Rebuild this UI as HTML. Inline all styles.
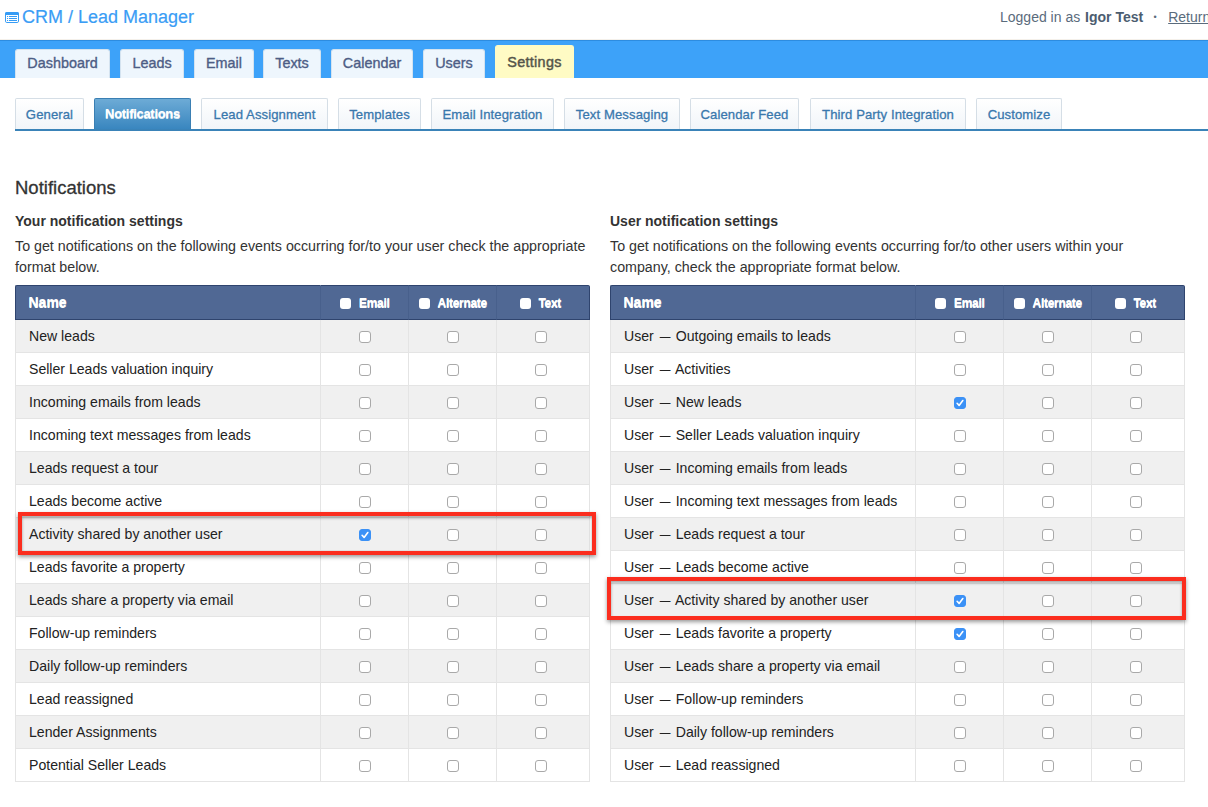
<!DOCTYPE html>
<html lang="en">
<head>
<meta charset="utf-8">
<title>CRM / Lead Manager</title>
<style>
*{box-sizing:border-box;}
html,body{margin:0;padding:0;background:#fff;}
body{width:1208px;height:807px;overflow:hidden;position:relative;font-family:"Liberation Sans",Arial,sans-serif;font-size:14px;color:#222;}
.abs{position:absolute;}
#title{left:22px;top:6px;font-size:18px;color:#3a9df5;-webkit-text-stroke:0.2px #3a9df5;white-space:nowrap;line-height:22px;}
#ticon{left:5px;top:12px;}
#logged{left:1000px;top:8px;font-size:14px;color:#5a6b7c;white-space:nowrap;line-height:18px;}
#logged b{color:#4c5d70;margin-left:1px;}
#logged u{color:#5a6b7c;}
#bar{left:0;top:40px;width:1208px;height:38px;background:#3da2f9;border-top:1px solid #2d8ce0;box-shadow:0 -1px 0 #f4f0ea;}
.mt{position:absolute;top:49px;height:29px;background:#eef6fd;border:1px solid #d4e3f0;border-bottom:none;border-radius:3px 3px 0 0;font-size:14.4px;color:#4d5d85;text-align:center;line-height:27px;white-space:nowrap;-webkit-text-stroke:0.35px #4d5d85;}
.mt.act{top:45px;height:33px;background:#fffbc4;border-color:#fffbc4;color:#55554a;line-height:32px;letter-spacing:0.3px;-webkit-text-stroke:0.45px #55554a;}
.st{position:absolute;top:98px;height:31px;background:linear-gradient(#ffffff,#f1f5f9);border:1px solid #d5dee6;border-bottom:none;border-radius:2px 2px 0 0;font-size:13.1px;color:#3a78ad;text-align:center;line-height:31px;white-space:nowrap;letter-spacing:0.1px;-webkit-text-stroke:0.3px #3a78ad;}
.st.act{background:linear-gradient(#6dabd6,#3986bf);border-color:#3a7fb3;color:#fff;font-weight:bold;font-size:13px;letter-spacing:-0.3px;-webkit-text-stroke:0;text-shadow:0 0.6px 0 rgba(255,255,255,.8);line-height:30px;}
#stline{left:15px;top:129px;width:1193px;height:2px;background:#3a83b8;}
h1{position:absolute;left:15px;top:177px;margin:0;font-size:18.5px;font-weight:normal;color:#333;line-height:22px;-webkit-text-stroke:0.3px #333;}
.h2{position:absolute;top:212px;font-size:14px;font-weight:bold;color:#333;line-height:18px;white-space:nowrap;}
.p{position:absolute;top:236px;font-size:14.25px;color:#333;line-height:21px;white-space:nowrap;}
table.nt{position:absolute;top:285px;width:575px;border-collapse:separate;border-spacing:0;table-layout:fixed;font-size:14px;}
table.lt{left:15px;}
table.rt{left:610px;}
.nt th{height:35px;background:#506894;color:#fff;font-size:12px;letter-spacing:-0.3px;font-weight:bold;text-align:center;padding:0;border-top:1px solid #2f446e;border-bottom:1px solid #2f446e;border-right:1px solid #48608c;white-space:nowrap;text-shadow:0 1px 0 #fff;}
.nt th.nm{width:306px;text-align:left;padding-left:12.5px;padding-bottom:2px;font-size:14px;letter-spacing:0;border-left:1px solid #2f446e;border-radius:2px 0 0 0;}
.nt td.last{padding-right:5px;}.nt th.last{padding-right:6px;}
.nt th.last{border-right:1px solid #2f446e;border-radius:0 2px 0 0;}
.nt th:nth-child(2),.nt th:nth-child(3){width:88px;}
.nt td{height:33px;padding:0;text-align:center;border-bottom:1px solid #e4e4e4;border-right:1px solid #e4e4e4;color:#222;vertical-align:middle;font-size:14.1px;}
.nt td.nm{text-align:left;padding-left:13px;border-left:1px solid #e4e4e4;white-space:nowrap;}
.nt tr.odd td{background:#f0f0f0;}
.nt tr.even td{background:#fff;}
.d{display:inline-block;transform:scaleX(.76);}
.cb{display:inline-block;width:12px;height:12px;border:1px solid #a9a9a9;margin-left:1px;border-radius:3px;background:#fff;vertical-align:middle;position:relative;top:0px;}
.cb.on{background:#3b91f6;border-color:#3b91f6;}
.cb.on svg{position:absolute;left:-1px;top:-1px;}
.hcb{display:inline-block;width:11px;height:11px;border-radius:3px;background:#fff;vertical-align:middle;margin-left:1px;margin-right:7.5px;position:relative;top:0.5px;}
.red{position:absolute;border:4px solid #fb2d1e;box-shadow:0 2px 4px rgba(0,0,0,.4),inset 0 2px 3px rgba(0,0,0,.35);}
</style>
</head>
<body>
<svg id="ticon" class="abs" width="14" height="11" viewBox="0 0 14 11" shape-rendering="auto"><rect x="0.5" y="0.5" width="13" height="10" rx="1.3" fill="#fff" stroke="#369cf5"/><path d="M0 3V1.5Q0 0 1.5 0H12.5Q14 0 14 1.5V3Z" fill="#369cf5"/><g fill="#369cf5"><rect x="2" y="4" width="1.1" height="1"/><rect x="4" y="4" width="8" height="1"/><rect x="2" y="6" width="1.1" height="1"/><rect x="4" y="6" width="8" height="1"/><rect x="2" y="8" width="1.1" height="1"/><rect x="4" y="8" width="8" height="1"/></g></svg>
<div id="title" class="abs">CRM / Lead Manager</div>
<div id="logged" class="abs">Logged in as <b>Igor Test</b><span style="display:inline-block;width:25px;text-align:center;font-size:9px;position:relative;top:-2px;left:-0.5px">•</span><u>Return to site</u></div>
<div id="bar" class="abs"></div>
<div class="mt" style="left:15px;width:95px;">Dashboard</div>
<div class="mt" style="left:120px;width:64px;">Leads</div>
<div class="mt" style="left:194px;width:60px;">Email</div>
<div class="mt" style="left:263px;width:58px;">Texts</div>
<div class="mt" style="left:331px;width:82px;">Calendar</div>
<div class="mt" style="left:423px;width:62px;">Users</div>
<div class="mt act" style="left:495px;width:79px;">Settings</div>

<div class="st" style="left:15px;width:69px;">General</div>
<div class="st act" style="left:94px;width:97px;">Notifications</div>
<div class="st" style="left:201px;width:127px;">Lead Assignment</div>
<div class="st" style="left:338px;width:83px;">Templates</div>
<div class="st" style="left:431px;width:123px;">Email Integration</div>
<div class="st" style="left:564px;width:116px;">Text Messaging</div>
<div class="st" style="left:690px;width:109px;">Calendar Feed</div>
<div class="st" style="left:810px;width:156px;">Third Party Integration</div>
<div class="st" style="left:976px;width:86px;">Customize</div>
<div id="stline" class="abs"></div>

<h1>Notifications</h1>
<div class="h2" style="left:15px;">Your notification settings</div>
<div class="p" style="left:15px;">To get notifications on the following events occurring for/to your user check the appropriate<br>format below.</div>
<div class="h2" style="left:610px;">User notification settings</div>
<div class="p" style="left:610px;">To get notifications on the following events occurring for/to other users within your<br>company, check the appropriate format below.</div>

<table class="nt lt">
<thead><tr><th class="nm">Name</th><th><span class="hcb"></span>Email</th><th><span class="hcb"></span>Alternate</th><th class="last"><span class="hcb"></span>Text</th></tr></thead>
<tbody>
<tr class="odd"><td class="nm">New leads</td><td><span class="cb"></span></td><td><span class="cb"></span></td><td class="last"><span class="cb"></span></td></tr>
<tr class="even"><td class="nm">Seller Leads valuation inquiry</td><td><span class="cb"></span></td><td><span class="cb"></span></td><td class="last"><span class="cb"></span></td></tr>
<tr class="odd"><td class="nm">Incoming emails from leads</td><td><span class="cb"></span></td><td><span class="cb"></span></td><td class="last"><span class="cb"></span></td></tr>
<tr class="even"><td class="nm">Incoming text messages from leads</td><td><span class="cb"></span></td><td><span class="cb"></span></td><td class="last"><span class="cb"></span></td></tr>
<tr class="odd"><td class="nm">Leads request a tour</td><td><span class="cb"></span></td><td><span class="cb"></span></td><td class="last"><span class="cb"></span></td></tr>
<tr class="even"><td class="nm">Leads become active</td><td><span class="cb"></span></td><td><span class="cb"></span></td><td class="last"><span class="cb"></span></td></tr>
<tr class="odd"><td class="nm">Activity shared by another user</td><td><span class="cb on"><svg viewBox="0 0 12 12" width="12" height="12"><path d="M3.1 6.3 L5.1 8.4 L8.8 3.5" fill="none" stroke="#fff" stroke-width="1.6" stroke-linecap="round" stroke-linejoin="round"/></svg></span></td><td><span class="cb"></span></td><td class="last"><span class="cb"></span></td></tr>
<tr class="even"><td class="nm">Leads favorite a property</td><td><span class="cb"></span></td><td><span class="cb"></span></td><td class="last"><span class="cb"></span></td></tr>
<tr class="odd"><td class="nm">Leads share a property via email</td><td><span class="cb"></span></td><td><span class="cb"></span></td><td class="last"><span class="cb"></span></td></tr>
<tr class="even"><td class="nm">Follow-up reminders</td><td><span class="cb"></span></td><td><span class="cb"></span></td><td class="last"><span class="cb"></span></td></tr>
<tr class="odd"><td class="nm">Daily follow-up reminders</td><td><span class="cb"></span></td><td><span class="cb"></span></td><td class="last"><span class="cb"></span></td></tr>
<tr class="even"><td class="nm">Lead reassigned</td><td><span class="cb"></span></td><td><span class="cb"></span></td><td class="last"><span class="cb"></span></td></tr>
<tr class="odd"><td class="nm">Lender Assignments</td><td><span class="cb"></span></td><td><span class="cb"></span></td><td class="last"><span class="cb"></span></td></tr>
<tr class="even"><td class="nm">Potential Seller Leads</td><td><span class="cb"></span></td><td><span class="cb"></span></td><td class="last"><span class="cb"></span></td></tr>
</tbody></table>
<table class="nt rt">
<thead><tr><th class="nm">Name</th><th><span class="hcb"></span>Email</th><th><span class="hcb"></span>Alternate</th><th class="last"><span class="hcb"></span>Text</th></tr></thead>
<tbody>
<tr class="odd"><td class="nm">User <span class="d">—</span> Outgoing emails to leads</td><td><span class="cb"></span></td><td><span class="cb"></span></td><td class="last"><span class="cb"></span></td></tr>
<tr class="even"><td class="nm">User <span class="d">—</span> Activities</td><td><span class="cb"></span></td><td><span class="cb"></span></td><td class="last"><span class="cb"></span></td></tr>
<tr class="odd"><td class="nm">User <span class="d">—</span> New leads</td><td><span class="cb on"><svg viewBox="0 0 12 12" width="12" height="12"><path d="M3.1 6.3 L5.1 8.4 L8.8 3.5" fill="none" stroke="#fff" stroke-width="1.6" stroke-linecap="round" stroke-linejoin="round"/></svg></span></td><td><span class="cb"></span></td><td class="last"><span class="cb"></span></td></tr>
<tr class="even"><td class="nm">User <span class="d">—</span> Seller Leads valuation inquiry</td><td><span class="cb"></span></td><td><span class="cb"></span></td><td class="last"><span class="cb"></span></td></tr>
<tr class="odd"><td class="nm">User <span class="d">—</span> Incoming emails from leads</td><td><span class="cb"></span></td><td><span class="cb"></span></td><td class="last"><span class="cb"></span></td></tr>
<tr class="even"><td class="nm">User <span class="d">—</span> Incoming text messages from leads</td><td><span class="cb"></span></td><td><span class="cb"></span></td><td class="last"><span class="cb"></span></td></tr>
<tr class="odd"><td class="nm">User <span class="d">—</span> Leads request a tour</td><td><span class="cb"></span></td><td><span class="cb"></span></td><td class="last"><span class="cb"></span></td></tr>
<tr class="even"><td class="nm">User <span class="d">—</span> Leads become active</td><td><span class="cb"></span></td><td><span class="cb"></span></td><td class="last"><span class="cb"></span></td></tr>
<tr class="odd"><td class="nm">User <span class="d">—</span> Activity shared by another user</td><td><span class="cb on"><svg viewBox="0 0 12 12" width="12" height="12"><path d="M3.1 6.3 L5.1 8.4 L8.8 3.5" fill="none" stroke="#fff" stroke-width="1.6" stroke-linecap="round" stroke-linejoin="round"/></svg></span></td><td><span class="cb"></span></td><td class="last"><span class="cb"></span></td></tr>
<tr class="even"><td class="nm">User <span class="d">—</span> Leads favorite a property</td><td><span class="cb on"><svg viewBox="0 0 12 12" width="12" height="12"><path d="M3.1 6.3 L5.1 8.4 L8.8 3.5" fill="none" stroke="#fff" stroke-width="1.6" stroke-linecap="round" stroke-linejoin="round"/></svg></span></td><td><span class="cb"></span></td><td class="last"><span class="cb"></span></td></tr>
<tr class="odd"><td class="nm">User <span class="d">—</span> Leads share a property via email</td><td><span class="cb"></span></td><td><span class="cb"></span></td><td class="last"><span class="cb"></span></td></tr>
<tr class="even"><td class="nm">User <span class="d">—</span> Follow-up reminders</td><td><span class="cb"></span></td><td><span class="cb"></span></td><td class="last"><span class="cb"></span></td></tr>
<tr class="odd"><td class="nm">User <span class="d">—</span> Daily follow-up reminders</td><td><span class="cb"></span></td><td><span class="cb"></span></td><td class="last"><span class="cb"></span></td></tr>
<tr class="even"><td class="nm">User <span class="d">—</span> Lead reassigned</td><td><span class="cb"></span></td><td><span class="cb"></span></td><td class="last"><span class="cb"></span></td></tr>
</tbody></table>

<div class="red" style="left:18px;top:512px;width:578px;height:43px;"></div>
<div class="red" style="left:607px;top:577px;width:579px;height:43px;"></div>
</body>
</html>
